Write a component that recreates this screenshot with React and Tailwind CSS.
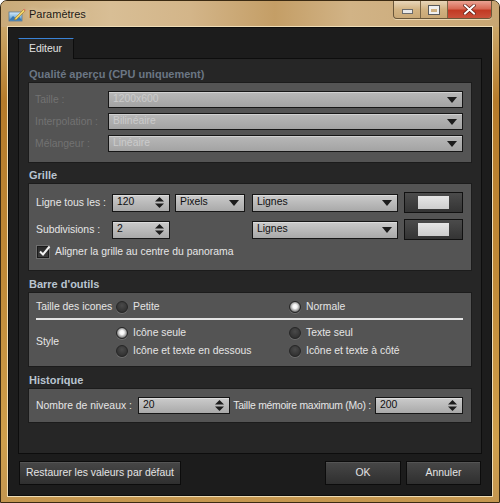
import React from "react";

function DownArrow() {
  return (
    <svg width="10" height="6" viewBox="0 0 10 6" className="shrink-0">
      <path d="M0 0H10L5 6Z" fill="#1c1c1c" />
    </svg>
  );
}

function SpinArrows() {
  return (
    <svg width="9" height="11" viewBox="0 0 9 11" className="shrink-0">
      <path d="M0 4.5L4.5 0L9 4.5Z" fill="#1c1c1c" />
      <path d="M0 6.5H9L4.5 11Z" fill="#1c1c1c" />
    </svg>
  );
}

function Combo({ className, text, disabled }) {
  return (
    <div
      className={`${className} flex items-center justify-between border border-[#161616] pl-[4px] pr-[5px] shadow-[inset_0_1px_0_rgba(255,255,255,0.35)] ${
        disabled
          ? "bg-[linear-gradient(180deg,#b8b8b8,#a3a3a3)] text-[#cbcbcb]"
          : "bg-[linear-gradient(180deg,#cbcbcb,#a9a9a9)] text-[#101010]"
      }`}
    >
      <span className="leading-none whitespace-nowrap">{text}</span>
      <DownArrow />
    </div>
  );
}

function Spin({ className, value }) {
  return (
    <div
      className={`${className} flex items-center justify-between border border-[#161616] pl-[4px] pr-[5px] shadow-[inset_0_1px_0_rgba(255,255,255,0.35)] bg-[linear-gradient(180deg,#cbcbcb,#a9a9a9)] text-[#101010]`}
    >
      <span className="leading-none">{value}</span>
      <SpinArrows />
    </div>
  );
}

function ColorBtn() {
  return (
    <div className="w-[59px] h-[21px] shrink-0 border border-[#111] bg-[linear-gradient(180deg,#4b4b4b,#343434)] flex items-center justify-center">
      <div className="w-[31px] h-[13px] bg-[linear-gradient(180deg,#e6e6e6,#cdcdcd)]" />
    </div>
  );
}

function Radio({ checked }) {
  return (
    <div
      className={`w-[12px] h-[12px] shrink-0 rounded-full border border-[#262626] shadow-[0_1px_0_rgba(140,140,140,0.45)] ${
        checked
          ? "bg-[radial-gradient(circle_at_50%_45%,#ffffff_0%,#f4f4f4_28%,#a8a8a8_55%,#3e3e3e_85%)]"
          : "bg-[radial-gradient(circle_at_50%_35%,#4a4a4a_0%,#383838_55%,#2b2b2b_100%)]"
      }`}
    />
  );
}

function RadioItem({ checked, label }) {
  return (
    <div className="flex items-center gap-[5px] h-[14px]">
      <Radio checked={checked} />
      <span className="text-[#e4e4e4] whitespace-nowrap">{label}</span>
    </div>
  );
}

function Heading({ children, disabled }) {
  return (
    <div
      className={`h-[15px] leading-[15px] pl-[1px] font-bold text-[11px] ${
        disabled ? "text-[#6b7684]" : "text-[#b9c4d0]"
      }`}
    >
      {children}
    </div>
  );
}

function Box({ className, children }) {
  return (
    <div className={`${className} border border-[#1c1c1c] bg-[#545454]`}>{children}</div>
  );
}

function Button({ className, children }) {
  return (
    <div
      className={`${className} h-[24px] border border-[#0c0c0c] bg-[linear-gradient(180deg,#474747,#2f2f2f)] shadow-[inset_0_1px_0_rgba(255,255,255,0.08)] flex items-center justify-center text-[#e4e4e4] whitespace-nowrap`}
    >
      {children}
    </div>
  );
}

function TitleIcon() {
  return (
    <svg width="18" height="16" viewBox="0 0 18 16">
      <defs>
        <linearGradient id="pic" x1="0" y1="0" x2="0" y2="1">
          <stop offset="0" stopColor="#d8ecfa" />
          <stop offset="0.6" stopColor="#7fb4dc" />
          <stop offset="1" stopColor="#3f83bf" />
        </linearGradient>
      </defs>
      <rect x="1" y="6" width="13" height="9" fill="url(#pic)" stroke="#5a7c98" strokeWidth="0.8" />
      <path d="M1.5 14L5 10L8 12.5L10.5 10L13.5 14Z" fill="#3a79b4" />
      <path d="M7 12L15.5 3.5L17 5L8.5 13.5L6.5 14Z" fill="#f3d36a" stroke="#9c7a20" strokeWidth="0.6" />
      <path d="M15.5 3.5L16.3 2.7L17.8 4.2L17 5Z" fill="#e86a6a" />
    </svg>
  );
}

function WindowButtons() {
  return (
    <div className="mr-[7px] flex h-[18px] rounded-b-[4px] border border-t-0 border-[#6a573a] overflow-hidden shadow-[0_1px_0_rgba(255,240,210,0.6)]">
      <div className="w-[27px] h-full border-r border-[#7b6646] bg-[linear-gradient(180deg,rgba(255,248,235,0.55),rgba(220,190,140,0.35)_50%,rgba(190,155,100,0.3))] flex items-end justify-center pb-[4px]">
        <div className="w-[9px] h-[3px] bg-[#e8e8e8] border border-[#6b6b6b] box-content" />
      </div>
      <div className="w-[27px] h-full border-r border-[#7b6646] bg-[linear-gradient(180deg,rgba(255,248,235,0.55),rgba(220,190,140,0.35)_50%,rgba(190,155,100,0.3))] flex items-center justify-center">
        <div className="w-[10px] h-[8px] border-[2px] border-t-[3px] border-[#f0f0f0] outline outline-1 outline-[#5a5a5a]" />
      </div>
      <div className="w-[43px] h-full bg-[linear-gradient(180deg,#eba393_0%,#d86a55_45%,#c23a24_55%,#c9513a_100%)] flex items-center justify-center">
        <svg width="13" height="11" viewBox="0 0 13 11">
          <path d="M2 1.5L11 9.5M11 1.5L2 9.5" stroke="#5a1a10" strokeWidth="3.4" strokeLinecap="square" />
          <path d="M2 1.5L11 9.5M11 1.5L2 9.5" stroke="#ffffff" strokeWidth="2" strokeLinecap="square" />
        </svg>
      </div>
    </div>
  );
}

export default function App() {
  return (
    <div className="w-[500px] h-[503px] flex flex-col overflow-hidden rounded-t-[7px] border border-[#3b2a12] bg-[linear-gradient(180deg,#d0b07c_0%,#c8a161_7%,#b67b2a_20%,#c08a38_55%,#cf9f4c_88%,#c49650_100%)] font-['Liberation_Sans',Arial,sans-serif] text-[10.4px]">
      {/* Title bar */}
      <div className="h-[26px] shrink-0 flex items-start justify-between bg-[linear-gradient(90deg,#c9aa79_0%,#d8be95_22%,#d3b589_38%,#c49e66_55%,#d1b386_70%,#c8a673_100%)]">
        <div className="flex items-center pl-[7px] pt-[5px] gap-[3px]">
          <TitleIcon />
          <span className="text-[11px] text-[#1e1a14] leading-none [text-shadow:0_0_6px_rgba(255,245,225,0.9)]">
            Paramètres
          </span>
        </div>
        <WindowButtons />
      </div>

      {/* Client area */}
      <div className="mx-[7px] mb-[6px] flex-1 flex flex-col border border-[#0e0e0e] shadow-[0_0_0_1px_#eedcb6] bg-[#1c1c1c] pl-[9px] pr-[9px] pt-[10px]">
        {/* Tab header */}
        <div className="flex h-[21px] shrink-0">
          <div className="w-[56px] h-full border-l border-r border-[#0d0d0d] border-t border-t-[#3a82d6] bg-[#262626] pl-[10px] flex items-center text-[#e2e2e2]">
            Editeur
          </div>
          <div className="flex-1 h-full border-b border-[#0d0d0d]" />
        </div>

        {/* Tab panel */}
        <div className="h-[395px] shrink-0 border-l border-r border-b border-[#0d0d0d] bg-[#262626] pt-[8px] px-[9px] flex flex-col">
          <Heading disabled>Qualité aperçu (CPU uniquement)</Heading>
          <Box className="h-[81px] pt-[8px] pl-[6px] pr-[8px] flex flex-col gap-[5px]">
            {[
              ["Taille :", "1200x600"],
              ["Interpolation :", "Bilinéaire"],
              ["Mélangeur :", "Linéaire"],
            ].map(([l, v]) => (
              <div key={l} className="flex items-center h-[17px]">
                <span className="w-[73px] shrink-0 text-[#727272] whitespace-nowrap">{l}</span>
                <Combo className="flex-1 h-[17px]" text={v} disabled />
              </div>
            ))}
          </Box>

          <div className="mt-[5px]">
            <Heading>Grille</Heading>
          </div>
          <Box className="h-[88px] pt-[8px] pl-[7px] pr-[8px] flex flex-col">
            <div className="flex items-center h-[21px]">
              <span className="w-[76px] shrink-0 text-[#e6e6e6] whitespace-nowrap">Ligne tous les :</span>
              <Spin className="w-[58px] h-[18px] shrink-0" value="120" />
              <Combo className="ml-[5px] w-[70px] h-[18px] shrink-0" text="Pixels" />
              <Combo className="ml-[7px] w-[146px] h-[18px] shrink-0" text="Lignes" />
              <div className="ml-[6px]">
                <ColorBtn />
              </div>
            </div>
            <div className="flex items-center h-[21px] mt-[6px]">
              <span className="w-[76px] shrink-0 text-[#e6e6e6] whitespace-nowrap">Subdivisions :</span>
              <Spin className="w-[58px] h-[18px] shrink-0" value="2" />
              <Combo className="ml-[82px] w-[146px] h-[18px] shrink-0" text="Lignes" />
              <div className="ml-[6px]">
                <ColorBtn />
              </div>
            </div>
            <div className="flex items-center h-[14px] mt-[5px] pl-[1px] gap-[6px]">
              <div className="relative w-[12px] h-[12px] border border-[#1a1a1a] bg-[linear-gradient(180deg,#2a2a2a,#3c3c3c)] shadow-[0_0_0_1px_rgba(160,160,160,0.35)]">
                <svg width="13" height="12" viewBox="0 0 13 12" className="absolute left-[0px] top-[-2px]">
                  <path d="M2 6.5L5 9.5L11.5 1.5" stroke="#f2f2f2" strokeWidth="2" fill="none" />
                </svg>
              </div>
              <span className="text-[#e6e6e6] whitespace-nowrap">Aligner la grille au centre du panorama</span>
            </div>
          </Box>

          <div className="mt-[6px]">
            <Heading>Barre d'outils</Heading>
          </div>
          <Box className="h-[75px] pt-[7px] pl-[7px] pr-[8px] flex flex-col">
            <div className="flex items-center h-[14px]">
              <span className="w-[80px] shrink-0 text-[#e6e6e6] whitespace-nowrap">Taille des icones</span>
              <div className="w-[173px] shrink-0">
                <RadioItem label="Petite" />
              </div>
              <RadioItem checked label="Normale" />
            </div>
            <div className="h-[2px] mt-[4px] bg-[#e4e4e4]" />
            <div className="flex mt-[6px]">
              <div className="w-[80px] shrink-0 flex items-center text-[#e6e6e6]">Style</div>
              <div className="grid grid-cols-[173px_1fr] gap-y-[4px]">
                <RadioItem checked label="Icône seule" />
                <RadioItem label="Texte seul" />
                <RadioItem label="Icône et texte en dessous" />
                <RadioItem label="Icône et texte à côté" />
              </div>
            </div>
          </Box>

          <div className="mt-[6px]">
            <Heading>Historique</Heading>
          </div>
          <Box className="h-[35px] pl-[7px] pr-[8px] flex items-center">
            <span className="w-[102px] shrink-0 text-[#e6e6e6] whitespace-nowrap">Nombre de niveaux :</span>
            <Spin className="w-[92px] h-[17px] shrink-0" value="20" />
            <span className="flex-1 min-w-0 text-right pr-[4px] text-[#e6e6e6] whitespace-nowrap tracking-[-0.25px]">
              Taille mémoire maximum (Mo) :
            </span>
            <Spin className="w-[88px] h-[17px] shrink-0" value="200" />
          </Box>
        </div>

        {/* Buttons */}
        <div className="flex mt-[7px] shrink-0">
          <Button className="ml-[1px] w-[162px]">Restaurer les valeurs par défaut</Button>
          <Button className="ml-auto w-[76px]">OK</Button>
          <Button className="ml-[5px] mr-[1px] w-[75px]">Annuler</Button>
        </div>
      </div>
    </div>
  );
}
